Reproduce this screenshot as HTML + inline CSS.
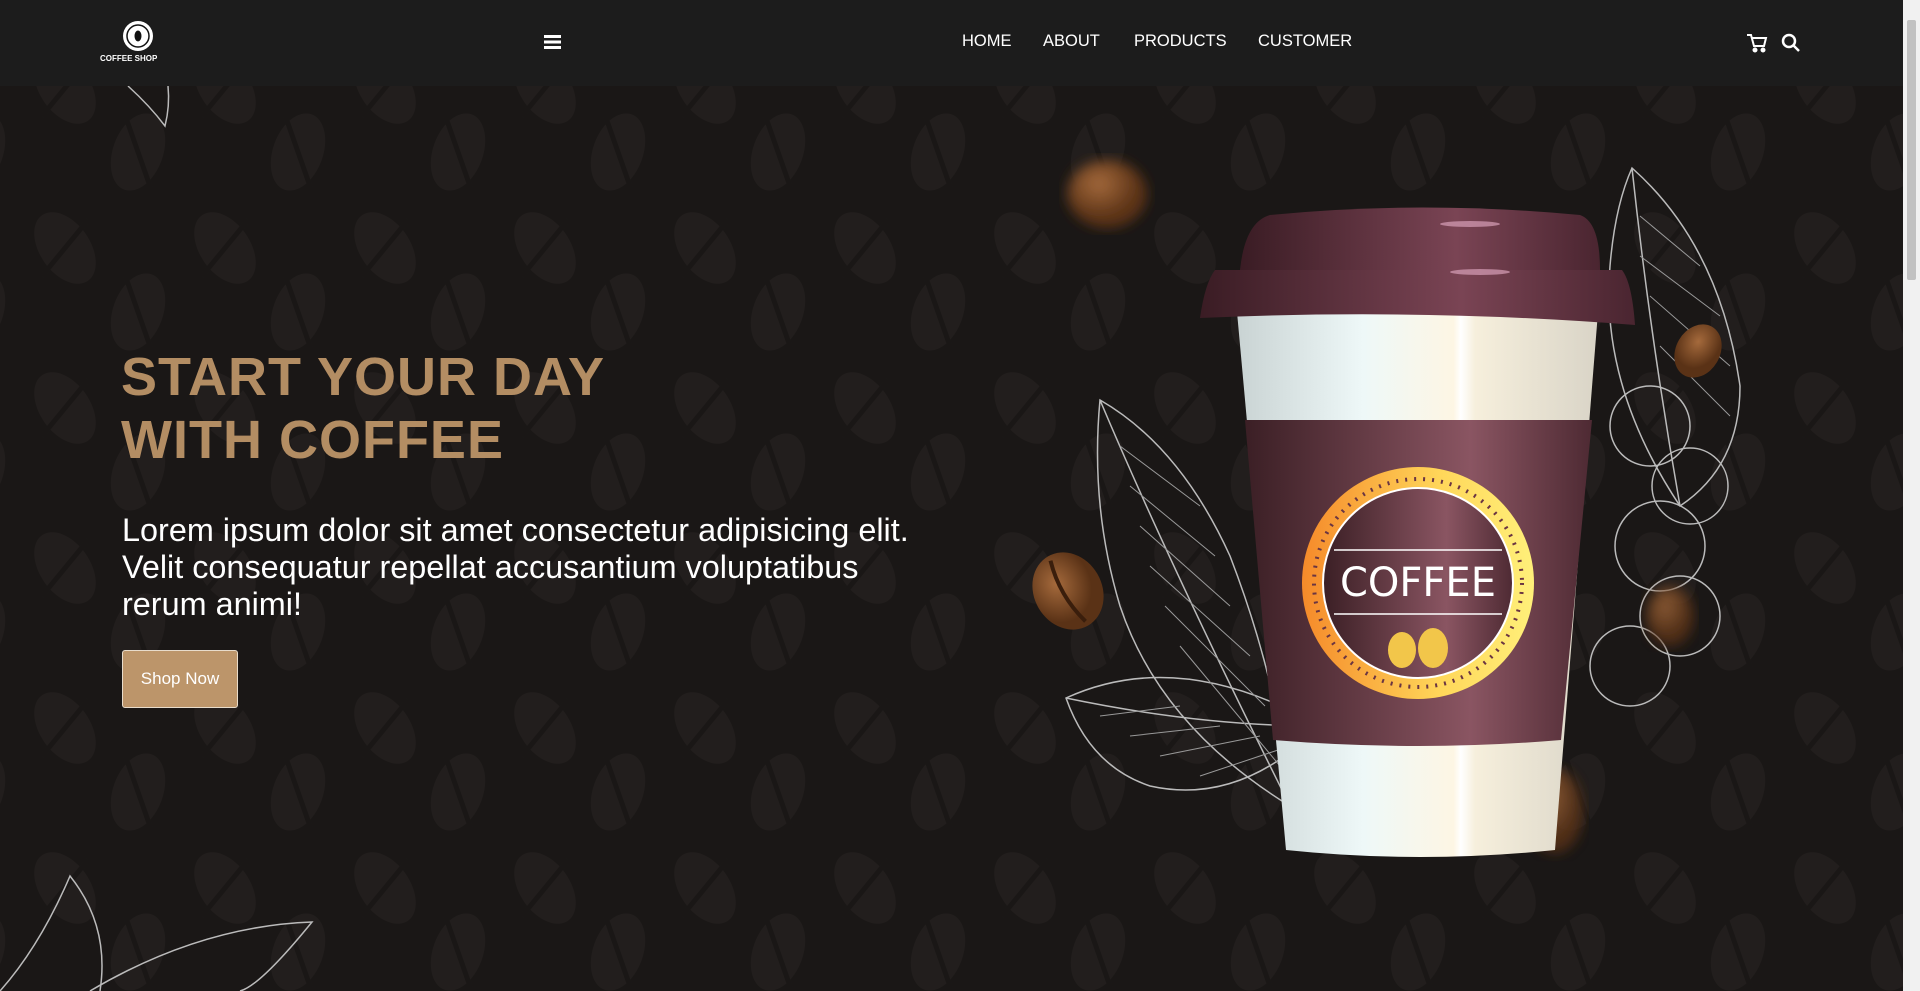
<!DOCTYPE html>
<html><head><meta charset="utf-8"><style>
*{margin:0;padding:0;box-sizing:border-box}
html,body{width:1920px;height:991px;overflow:hidden;background:#1a1716;font-family:"Liberation Sans",Arial,sans-serif}
.hero{position:absolute;left:0;top:0;width:1903px;height:991px;background:#1a1716}
header{position:absolute;left:0;top:0;width:1903px;height:86px;background:#1c1c1c;z-index:5}
nav a{position:absolute;top:32px;color:#fff;font-size:16.5px;text-decoration:none}
h1{position:absolute;left:121px;top:346px;color:#b38d63;font-size:54px;line-height:63px;font-weight:bold;letter-spacing:1px}
p.t{position:absolute;left:122px;top:512px;color:#fff;font-size:32.4px;line-height:37px;width:805px}
.btn{position:absolute;left:122px;top:650px;width:116px;height:58px;background:#bc956a;border:1px solid #e8dccb;border-radius:3px;color:#fff;font-size:17px;text-align:center;line-height:56px}
.sb{position:absolute;right:0;top:0;width:17px;height:991px;background:#f1f1f1}
.sb div{position:absolute;left:4px;top:20px;width:9px;height:260px;background:#c1c1c1;border-radius:2px}
</style></head><body>
<div class="hero">
<svg width="1903" height="991" style="position:absolute;left:0;top:0">
<defs>
<pattern id="p" width="160" height="160" patternUnits="userSpaceOnUse" x="20" y="40">
<g fill="#221e1d">
<ellipse cx="45" cy="48" rx="25" ry="40" transform="rotate(-35 45 48)"/>
<ellipse cx="118" cy="112" rx="25" ry="40" transform="rotate(20 118 112)"/>
</g>
<g stroke="#1a1716" stroke-width="5" fill="none">
<path d="M22 76 Q45 48 68 20"/><path d="M105 75 Q118 112 131 149"/>
</g>
</pattern>
<radialGradient id="bean" cx="40%" cy="35%"><stop offset="0" stop-color="#a56a3c"/><stop offset="1" stop-color="#5a3216"/></radialGradient>
<linearGradient id="cup" x1="0" x2="1"><stop offset="0" stop-color="#c9d3d3"/><stop offset=".35" stop-color="#eef8f8"/><stop offset=".6" stop-color="#fdf6e4"/><stop offset=".62" stop-color="#fff"/><stop offset=".66" stop-color="#f6efdc"/><stop offset="1" stop-color="#d9d4c7"/></linearGradient>
<linearGradient id="sl" x1="0" x2="1"><stop offset="0" stop-color="#3b1f25"/><stop offset=".65" stop-color="#8a5562"/><stop offset="1" stop-color="#4e2a33"/></linearGradient>
<linearGradient id="lid" x1="0" x2="1"><stop offset="0" stop-color="#3a1c24"/><stop offset=".6" stop-color="#7a4454"/><stop offset="1" stop-color="#4a2530"/></linearGradient>
<linearGradient id="ring" x1="0" x2="1"><stop offset="0" stop-color="#f58a2a"/><stop offset=".6" stop-color="#ffd75a"/><stop offset="1" stop-color="#fff07a"/></linearGradient>
<filter id="bl"><feGaussianBlur stdDeviation="6"/></filter>
</defs>
<rect width="1903" height="991" fill="url(#p)"/>
<g fill="none" stroke="#bbb" stroke-width="1.5">
<path d="M1100 400 Q1180 446 1230 556 Q1280 686 1290 806 Q1160 726 1120 606 Q1090 506 1100 400Z"/>
<path d="M1100 400 Q1170 566 1290 806"/>
<path d="M1066 698 Q1180 646 1320 726 Q1240 806 1150 786 Q1090 766 1066 698Z"/>
<path d="M1066 698 Q1200 726 1320 726"/>
<path d="M1632 168 Q1720 246 1740 386 Q1740 466 1680 506 Q1600 386 1610 266 Q1615 206 1632 168Z"/>
<path d="M1632 168 Q1650 336 1680 506"/>
<circle cx="1650" cy="426" r="40"/><circle cx="1690" cy="486" r="38"/><circle cx="1660" cy="546" r="45"/><circle cx="1680" cy="616" r="40"/><circle cx="1630" cy="666" r="40"/>
<path d="M0 991 Q40 946 70 876 Q110 926 100 991"/>
<path d="M90 991 Q200 926 312 922 Q260 986 240 991"/>
<path d="M128 86 Q150 106 165 126 Q170 106 168 86"/>
</g>
<g stroke="#999" stroke-width="1" fill="none">
<path d="M1120 446 L1200 506 M1130 486 L1215 556 M1140 526 L1230 606 M1150 566 L1250 656 M1165 606 L1265 706 M1180 646 L1280 766"/>
<path d="M1100 716 L1180 706 M1130 736 L1220 726 M1160 756 L1260 736 M1200 776 L1290 746"/>
<path d="M1640 216 L1700 266 M1640 256 L1720 316 M1650 296 L1730 366 M1660 346 L1730 416"/>
</g>
<ellipse cx="1107" cy="194" rx="40" ry="34" fill="url(#bean)" filter="url(#bl)"/>
<g transform="rotate(-30 1068 591)"><ellipse cx="1068" cy="591" rx="34" ry="40" fill="url(#bean)"/><path d="M1068 556 Q1058 591 1068 626" stroke="#3a1e0c" stroke-width="4" fill="none"/></g>
<g transform="rotate(30 1698 351)"><ellipse cx="1698" cy="351" rx="22" ry="28" fill="url(#bean)"/></g>
<ellipse cx="1670" cy="616" rx="24" ry="30" fill="url(#bean)" filter="url(#bl)" opacity=".8"/>
<ellipse cx="1555" cy="811" rx="28" ry="42" fill="url(#bean)" filter="url(#bl)" opacity=".8"/>
<path d="M1237 312 L1598 312 L1555 850 Q1420 864 1286 850Z" fill="url(#cup)"/>
<path d="M1245 420 L1592 420 L1561 740 Q1420 752 1273 740Z" fill="url(#sl)"/>
<path d="M1200 318 Q1205 283 1215 270 L1622 270 Q1632 283 1635 325 Q1420 308 1200 318Z" fill="url(#lid)"/>
<path d="M1240 270 Q1245 222 1270 215 Q1420 200 1580 215 Q1600 222 1600 270Z" fill="url(#lid)"/>
<ellipse cx="1470" cy="224" rx="30" ry="3" fill="#d7a0b8" opacity=".7"/>
<ellipse cx="1480" cy="272" rx="30" ry="3" fill="#d7a0b8" opacity=".7"/>
<circle cx="1418" cy="583" r="116" fill="url(#ring)"/>
<circle cx="1418" cy="583" r="104" fill="none" stroke="#6a3542" stroke-width="4" stroke-dasharray="2 7"/>
<circle cx="1418" cy="583" r="95" fill="url(#sl)" stroke="#fff" stroke-width="2"/>
<path d="M1334 550 H1502 M1334 614 H1502" stroke="#fff" stroke-width="1.5"/>
<text x="1418" y="596" text-anchor="middle" fill="#fff" font-size="40" font-family="DejaVu Sans,sans-serif">COFFEE</text>
<ellipse cx="1402" cy="650" rx="14" ry="18" fill="#f2c64a"/><ellipse cx="1433" cy="648" rx="15" ry="20" fill="#f2c64a"/>
</svg>
<h1>START YOUR DAY<br>WITH COFFEE</h1>
<p class="t">Lorem ipsum dolor sit amet consectetur adipisicing elit. Velit consequatur repellat accusantium voluptatibus rerum animi!</p>
<div class="btn">Shop Now</div>
</div>
<header>
<svg width="40" height="40" style="position:absolute;left:118px;top:18px"><circle cx="20" cy="18" r="15" fill="#fff"/><circle cx="20" cy="18" r="11" fill="none" stroke="#111" stroke-width="1.5"/><ellipse cx="20" cy="18" rx="3.5" ry="5.5" fill="#111"/></svg>
<div style="position:absolute;left:100px;top:54px;color:#fff;font-size:8px;font-weight:bold">COFFEE SHOP</div>
<svg width="18" height="16" style="position:absolute;left:544px;top:34px"><rect y="1" width="17" height="3" fill="#fff"/><rect y="6.5" width="17" height="3" fill="#fff"/><rect y="12" width="17" height="3" fill="#fff"/></svg>
<nav><a style="left:962px">HOME</a><a style="left:1043px">ABOUT</a><a style="left:1134px">PRODUCTS</a><a style="left:1258px">CUSTOMER</a></nav>
<svg width="22" height="20" style="position:absolute;left:1746px;top:33px" fill="none" stroke="#fff" stroke-width="2"><path d="M1 2h4l3 11h10l2-8H6"/><circle cx="9" cy="17" r="1.5" fill="#fff"/><circle cx="17" cy="17" r="1.5" fill="#fff"/></svg>
<svg width="20" height="20" style="position:absolute;left:1781px;top:33px" fill="none" stroke="#fff" stroke-width="2.5"><circle cx="8" cy="8" r="6"/><path d="M12.5 12.5L18 18"/></svg>
</header>
<div class="sb"><div></div></div>
</body></html>
